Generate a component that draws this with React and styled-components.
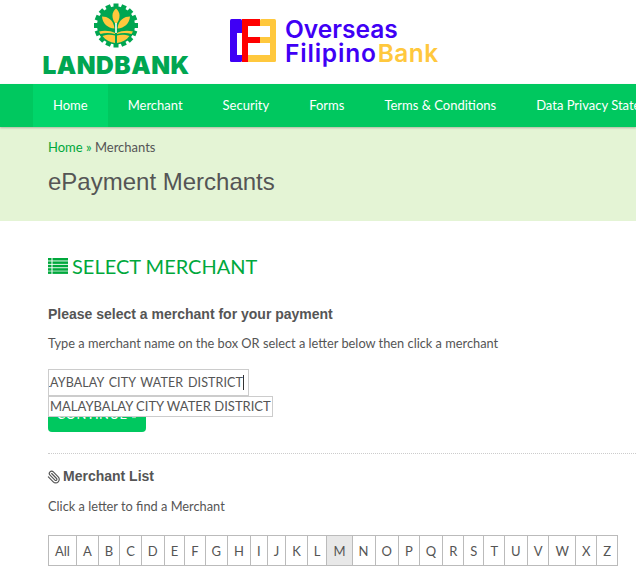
import React from "react";
import styled, { createGlobalStyle } from "styled-components";
import { Paperclip } from "lucide-react";

const GlobalStyle = createGlobalStyle`
  html, body {
    margin: 0;
    padding: 0;
    background: #fff;
    overflow: hidden;
  }
  body {
    font-family: "Lato", "Liberation Sans", sans-serif;
    color: #555;
  }
`;

const Page = styled.div`
  width: 636px;
  height: 576px;
  overflow: hidden;
`;

const Header = styled.header`
  height: 84px;
  display: flex;
  align-items: flex-start;
  padding-left: 43px;
  box-sizing: border-box;
`;

const LandbankLogo = styled.div`
  width: 146px;
  display: flex;
  flex-direction: column;
  align-items: center;
  padding-top: 3px;
`;

const LandbankName = styled.span`
  font-family: "Inter", "Liberation Sans", sans-serif;
  font-weight: 900;
  font-size: 24.5px;
  line-height: 20px;
  letter-spacing: 0.5px;
  margin-top: 7px;
  color: #00a651;
  white-space: nowrap;
`;

const OfbLogo = styled.div`
  display: flex;
  align-items: flex-start;
  gap: 9px;
  margin-left: 41px;
  padding-top: 19px;
`;

const OfbName = styled.div`
  font-family: "Inter", "Liberation Sans", sans-serif;
  font-weight: 600;
  font-size: 24.5px;
  line-height: 24px;
  color: #3f00f5;
  margin-top: -2px;
  white-space: nowrap;
`;

const OfbWide = styled.span`
  letter-spacing: 0.8px;
`;

const OfbAccent = styled.span`
  color: #ffc83d;
  margin-left: 1px;
  letter-spacing: 0.5px;
`;

const Nav = styled.nav`
  height: 43px;
  background: #00c85f;
  display: flex;
  padding-left: 33px;
  box-shadow: 0 1px 2px rgba(0, 0, 0, 0.25);
  position: relative;
  white-space: nowrap;
  overflow: hidden;
`;

const NavItem = styled.a`
  display: flex;
  align-items: center;
  height: 100%;
  padding: 0 20px 2px;
  box-sizing: border-box;
  font-size: 13px;
  color: #fff;
  flex-shrink: 0;
  background: ${(p) => (p.$active ? "#00d56a" : "transparent")};
`;

const Banner = styled.div`
  height: 94px;
  background: #e4f4d5;
  padding: 12px 48px 0;
  box-sizing: border-box;
`;

const Crumbs = styled.div`
  font-size: 13px;
  line-height: 17px;
  color: #555;
`;

const CrumbLink = styled.span`
  color: #00a83c;
`;

const PageTitle = styled.h1`
  margin: 11px 0 0;
  font-family: "Liberation Sans", sans-serif;
  font-weight: 400;
  font-size: 24px;
  line-height: 30px;
  color: #555;
`;

const Content = styled.main`
  padding: 33px 0 0 48px;
`;

const SectionTitle = styled.h2`
  display: flex;
  align-items: center;
  gap: 4px;
  margin: 0;
  font-weight: 400;
  font-size: 20px;
  line-height: 24px;
  color: #00a83c;
`;

const Lead = styled.h3`
  margin: 28px 0 0;
  font-family: "Liberation Sans", sans-serif;
  font-weight: 700;
  font-size: 14px;
  line-height: 17px;
  color: #555;
`;

const Hint = styled.p`
  margin: ${(p) => p.$top}px 0 0;
  font-size: 12.8px;
  line-height: 17px;
  color: #555;
`;

const SearchArea = styled.div`
  position: relative;
  margin-top: 17px;
  height: 63px;
`;

const SearchBox = styled.div`
  width: 201px;
  height: 27px;
  box-sizing: border-box;
  border: 1px solid #ccc;
  display: flex;
  align-items: center;
  justify-content: flex-end;
  padding-right: 4px;
  overflow: hidden;
  white-space: nowrap;
  font-size: 12.5px;
  letter-spacing: 0.1px;
  word-spacing: 1.5px;
  color: #555;
`;

const Caret = styled.span`
  flex-shrink: 0;
  width: 1px;
  height: 15px;
  background: #333;
`;

const Suggestion = styled.div`
  position: absolute;
  left: 0;
  top: 27px;
  z-index: 2;
  box-sizing: border-box;
  height: 21px;
  padding: 0 1px;
  border: 1px solid #ccc;
  background: #fff;
  font-size: 13px;
  line-height: 19px;
  white-space: nowrap;
  color: #555;
`;

const ContinueButton = styled.button`
  display: block;
  width: 98px;
  height: 36px;
  border: 0;
  border-radius: 4px;
  background: #00c85f;
  color: #fff;
  font-family: inherit;
  font-size: 13px;
  letter-spacing: 0.5px;
`;

const Divider = styled.hr`
  margin: 21px 0 0;
  border: 0;
  border-top: 1px dotted #ccc;
`;

const ListTitle = styled.h3`
  display: flex;
  align-items: center;
  gap: 2px;
  margin: 14px 0 0 -1px;
  font-family: "Liberation Sans", sans-serif;
  font-weight: 700;
  font-size: 14px;
  line-height: 17px;
  color: #555;
`;

const ClipIcon = styled(Paperclip)`
  width: 14px;
  height: 14px;
  stroke-width: 2;
  transform: scaleX(-1);
`;

const Letters = styled.div`
  display: inline-flex;
  margin-top: 20px;
  border: 1px solid #bbb;
  height: 31px;
  box-sizing: border-box;
`;

const Letter = styled.a`
  display: flex;
  align-items: center;
  justify-content: center;
  box-sizing: border-box;
  padding: 0 6px;
  font-size: 13px;
  color: #555;
  background: ${(p) => (p.$active ? "#e8e8e8" : "#fff")};
  & + & {
    border-left: 1px solid #bbb;
  }
`;

const letters = ["All", ..."ABCDEFGHIJKLMNOPQRSTUVWXZ"];
const navItems = ["Home", "Merchant", "Security", "Forms", "Terms & Conditions", "Data Privacy Statement"];

const GearMark = () => {
  const teeth = Array.from({ length: 16 }, (_, i) => (i * 360) / 16);
  return (
    <svg width="46" height="45" viewBox="0 0 46 45">
      <g fill="#00a651">
        {teeth.map((a) => (
          <rect key={a} x="20.5" y="0.5" width="5" height="6" transform={`rotate(${a} 23 22.5)`} />
        ))}
      </g>
      <circle cx="23" cy="22.5" r="19" fill="#00a651" />
      <path d="M23 5.500c4.500 3.500 5 10 0 16c-5-6-4.500-12.500 0-16z" fill="#ffc83d" />
      <path d="M9 13.500c5.500 0 11.500 3 12.500 12c-7-.5-12-5-12.500-12z" fill="#ffc83d" />
      <path d="M37 13.500c-5.500 0-11.500 3-12.500 12c7-.5 12-5 12.500-12z" fill="#ffc83d" />
      <path d="M22.200 20h1.600v10h-1.600z" fill="#fff" />
      <path d="M6 28.500c6-1.500 12-.5 16 1.500v1c-5-1.500-10-1.500-14.500 0z" fill="#ffc83d" />
      <path d="M40 28.500c-6-1.500-12-.5-16 1.500v1c5-1.500 10-1.500 14.500 0z" fill="#ffc83d" />
      <path d="M9.500 33c4-1.500 9-1.500 12.500-.5v7.500c-5-.5-9.500-3-12.500-7z" fill="#ffc83d" />
      <path d="M36.500 33c-4-1.500-9-1.500-12.500-.5v7.500c5-.5 9.500-3 12.500-7z" fill="#ffc83d" />
    </svg>
  );
};

const OfbMark = () => (
  <svg width="46" height="43" viewBox="0 0 46 43">
    <rect x="0" y="0" width="12" height="43" rx="1.500" fill="#3f00f5" />
    <rect x="7" y="14" width="5" height="22" fill="#fff" />
    <rect x="30" y="0" width="16" height="43" rx="1.500" fill="#ffc83d" />
    <rect x="12" y="36" width="30" height="7" fill="#ffc83d" />
    <rect x="18" y="7" width="22" height="29" fill="#fff" />
    <rect x="30" y="18" width="10" height="6" fill="#ffc83d" />
    <rect x="12" y="0" width="18" height="7" fill="#ff0000" />
    <rect x="12" y="0" width="6" height="43" fill="#ff0000" />
    <rect x="18" y="18" width="12" height="6" fill="#ff0000" />
  </svg>
);

const ListIcon = () => (
  <svg width="20" height="16" viewBox="0 0 20 16" fill="#00a83c">
    {[0, 3.4, 6.8, 10.2, 13.4].map((y) => (
      <g key={y}>
        <rect x="0" y={y} width="3.500" height="2.500" />
        <rect x="4.500" y={y} width="15.500" height="2.500" />
      </g>
    ))}
  </svg>
);

const App = () => {
  return (
    <Page>
      <GlobalStyle />
      <Header>
        <LandbankLogo>
          <GearMark />
          <LandbankName>LANDBANK</LandbankName>
        </LandbankLogo>
        <OfbLogo>
          <OfbMark />
          <OfbName>
            Overseas
            <br />
            <OfbWide>Filipino</OfbWide>
            <OfbAccent>Bank</OfbAccent>
          </OfbName>
        </OfbLogo>
      </Header>
      <Nav>
        {navItems.map((item, i) => (
          <NavItem key={item} $active={i === 0}>
            {item}
          </NavItem>
        ))}
      </Nav>
      <Banner>
        <Crumbs>
          <CrumbLink>Home »</CrumbLink> Merchants
        </Crumbs>
        <PageTitle>ePayment Merchants</PageTitle>
      </Banner>
      <Content>
        <SectionTitle>
          <ListIcon />
          SELECT MERCHANT
        </SectionTitle>
        <Lead>Please select a merchant for your payment</Lead>
        <Hint $top={12}>Type a merchant name on the box OR select a letter below then click a merchant</Hint>
        <SearchArea>
          <SearchBox>
            MALAYBALAY CITY WATER DISTRICT
            <Caret />
          </SearchBox>
          <Suggestion>MALAYBALAY CITY WATER DISTRICT</Suggestion>
          <ContinueButton>CONTINUE »</ContinueButton>
        </SearchArea>
        <Divider />
        <ListTitle>
          <ClipIcon />
          Merchant List
        </ListTitle>
        <Hint $top={13}>Click a letter to find a Merchant</Hint>
        <Letters>
          {letters.map((l) => (
            <Letter key={l} $active={l === "M"}>
              {l}
            </Letter>
          ))}
        </Letters>
      </Content>
    </Page>
  );
};

export default App;
